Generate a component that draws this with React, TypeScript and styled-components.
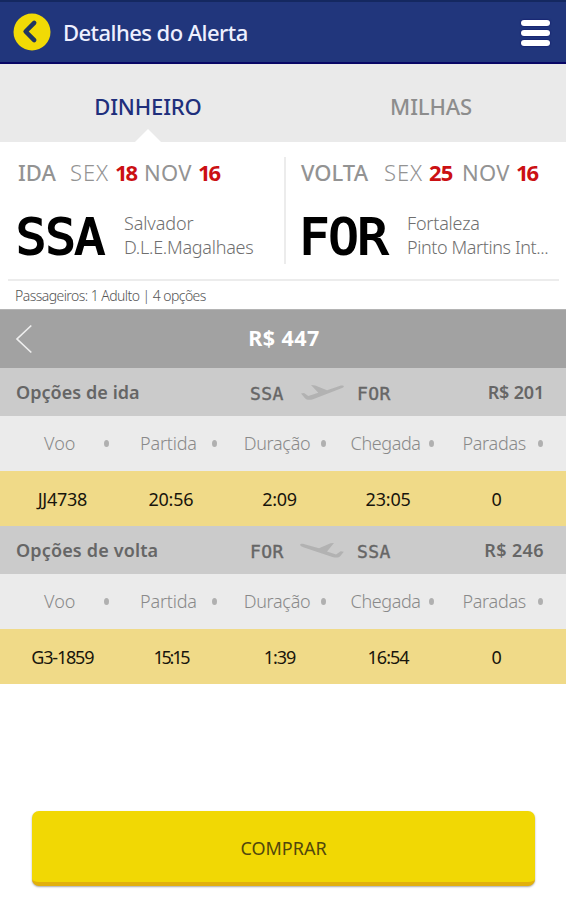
import React from "react";
import styled, { createGlobalStyle } from "styled-components";

const GlobalStyle = createGlobalStyle`
  * { box-sizing: border-box; }
  body { margin: 0; background: #fff; font-family: "Noto Sans", sans-serif; }
  button { font: inherit; border: 0; padding: 0; background: none; }
`;

const Screen = styled.main`
  width: 566px;
  height: 900px;
  display: flex;
  flex-direction: column;
  background: #fff;
  overflow: hidden;
  white-space: nowrap;
`;

const Header = styled.header`
  height: 64px;
  flex: none;
  display: flex;
  align-items: center;
  padding: 0 16px 0 13px;
  background: #21367c;
  border-top: 2px solid #142860;
  border-bottom: 2px solid #080666;
`;

const BackButton = styled.button`
  width: 38px;
  height: 38px;
  svg { display: block; }
`;

const Title = styled.h1`
  flex: 1;
  margin: 0 0 0 12px;
  font-size: 22px;
  line-height: 30px;
  font-weight: 500;
  letter-spacing: -0.55px;
  color: #eef0ff;
`;

const MenuButton = styled.button`
  display: flex;
  flex-direction: column;
  gap: 4px;
  width: 29px;
  margin-top: 1px;
`;

const MenuBar = styled.span`
  height: 6px;
  border-radius: 3px;
  background: #fff;
  box-shadow: 0 0 2px #07075f;
`;

const Tabs = styled.nav`
  height: 78px;
  flex: none;
  display: grid;
  grid-template-columns: 283px 283px;
  padding-left: 6.5px;
  background: #eaeaea;
`;

const Tab = styled.button<{ $active?: boolean }>`
  position: relative;
  padding-bottom: 7px;
  padding-top: 12px;
  line-height: 30px;
  font-size: 22px;
  font-weight: 500;
  letter-spacing: -0.15px;
  color: ${(p) => (p.$active ? "#202f7c" : "#8d8d8d")};
`;

const TabPointer = styled.i`
  position: absolute;
  left: 50%;
  bottom: 0;
  transform: translateX(-50%);
  border: 13px solid transparent;
  border-top: 0;
  border-bottom-color: #fff;
`;

const Trips = styled.section`
  height: 139px;
  flex: none;
  display: grid;
  grid-template-columns: 276px 275px;
  border-bottom: 2px solid #ececec;
  margin: 0 7px 0 8px;
  padding-top: 15px;
`;

const Trip = styled.article<{ $divided?: boolean }>`
  height: 107px;
  padding-left: ${(p) => (p.$divided ? 15 : 10)}px;
  border-left: ${(p) => (p.$divided ? "2px solid #ececec" : "0")};
  min-width: 0;
`;

const DateLine = styled.div`
  display: flex;
  height: 30px;
  line-height: 30px;
  font-size: 22px;
  color: #939393;
`;

const Direction = styled.span<{ $width: number }>`
  width: ${(p) => p.$width}px;
  font-weight: 500;
  letter-spacing: 0;
`;

const Weekday = styled.span`
  width: 45px;
  font-weight: 300;
  letter-spacing: 0.9px;
`;

const Month = styled.span`
  width: 54px;
  letter-spacing: 0.3px;
`;

const DateNumber = styled.span<{ $width?: number; $tight?: boolean }>`
  width: ${(p) => p.$width ?? 24}px;
  font-weight: 700;
  letter-spacing: ${(p) => (p.$tight ? -2.2 : -0.8)}px;
  color: #cb1013;
`;

const AirportLine = styled.div`
  display: flex;
  align-items: center;
  height: 60px;
  margin-top: 18px;
`;

const AirportCode = styled.strong`
  width: 108px;
  margin: 3px 0 0 -2px;
  font: 400 50px/60px "DejaVu Sans Mono", monospace;
  letter-spacing: -0.7px;
  color: #000;
  -webkit-text-stroke: 2px #000;
`;

const AirportName = styled.div`
  font-size: 18px;
  line-height: 24px;
  font-weight: 300;
  color: #6f6f6f;
`;

const Line = styled.div<{ $spacing: number }>`
  letter-spacing: ${(p) => p.$spacing}px;
`;

const Summary = styled.p`
  height: 28px;
  flex: none;
  margin: 0;
  padding-left: 15px;
  font-size: 14px;
  line-height: 29px;
  font-weight: 300;
  letter-spacing: -0.55px;
  color: #555;
`;

const PriceBar = styled.div`
  height: 59px;
  flex: none;
  display: grid;
  grid-template-columns: 36px 1fr 34px;
  align-items: center;
  padding-left: 15px;
  padding-right: 15px;
  background: #a2a2a2;
  border-top: 1px solid #b4b4b4;
  color: #fff;
  text-align: center;
  font-size: 21.5px;
  font-weight: 700;
  letter-spacing: 0.4px;
  svg { display: block; }
`;

const TotalPrice = styled.span`
  padding-bottom: 3px;
`;

const OptionBar = styled.div`
  height: 48px;
  flex: none;
  display: grid;
  grid-template-columns: 234px 50px 57px 1fr;
  align-items: center;
  padding: 0 22px 0 16px;
  background: #cbcbcb;
  color: #666;
  font-size: 18px;
  font-weight: 600;
  svg { display: block; margin-top: 2px; }
`;

const OptionTitle = styled.h2<{ $spacing: number }>`
  margin: 0;
  font-size: 18px;
  line-height: 24px;
  font-weight: 600;
  letter-spacing: ${(p) => p.$spacing}px;
`;

const SmallCode = styled.span`
  margin-top: 3px;
  font: 400 18px/24px "DejaVu Sans Mono", monospace;
  letter-spacing: 0.4px;
  -webkit-text-stroke: 0.4px #666;
`;

const OptionPrice = styled.span<{ $spacing: number }>`
  text-align: right;
  letter-spacing: ${(p) => p.$spacing}px;
`;

const RightSide = styled.div`
  display: flex;
  justify-content: space-between;
  align-items: center;
`;

const Columns = styled.div<{ $kind: "head" | "flight" }>`
  height: 55px;
  flex: none;
  display: grid;
  grid-template-columns: repeat(5, 108.6px);
  align-items: center;
  padding-left: ${(p) => (p.$kind === "head" ? 5.5 : 8)}px;
  padding-bottom: ${(p) => (p.$kind === "head" ? 2 : 0)}px;
  background: ${(p) => (p.$kind === "head" ? "#ebebeb" : "#f0da88")};
  color: ${(p) => (p.$kind === "head" ? "#898989" : "#18150c")};
  font-size: 18px;
  font-weight: ${(p) => (p.$kind === "head" ? 300 : 400)};
  text-align: center;
`;

const Cell = styled.span<{ $spacing?: number }>`
  position: relative;
  line-height: 24px;
  letter-spacing: ${(p) => p.$spacing ?? 0}px;
`;

const SortDot = styled.i`
  position: absolute;
  left: 98px;
  top: 9px;
  width: 5px;
  height: 7px;
  border-radius: 50%;
  background: #b0b0b0;
`;

const Footer = styled.footer`
  margin-top: auto;
  padding: 0 31px 14px 32px;
`;

const BuyButton = styled.button`
  display: block;
  width: 100%;
  height: 75px;
  padding-top: 2px;
  border-radius: 7px;
  border-bottom: 4px solid #e2b00c;
  background: #f1d804;
  box-shadow: 0 1px 2px #aaa;
  font-size: 18px;
  color: #51470c;
`;

const BackIcon = () => (
  <svg width="38" height="38" viewBox="0 0 38 38">
    <circle cx="19" cy="19" r="18.5" fill="#f1da05" />
    <path d="M21.200 9.800 12.600 18.500l8.600 8.700" fill="none" stroke="#203661" strokeWidth="4.500" strokeLinecap="round" strokeLinejoin="round" />
  </svg>
);

const ChevronIcon = () => (
  <svg width="18" height="30" viewBox="0 0 18 30">
    <path d="M16.300 1.500 2 15l14.300 13.500" fill="none" stroke="#eee" strokeWidth="1.700" />
  </svg>
);

const DepartureIcon = () => (
  <svg width="44" height="18" viewBox="0 0 44 18">
    <path d="M1 9.400 4 9l4.300 3 10-3.200L11 1l4.200.4L27 6.300 39.500 2c2-.7 4-.5 4.300.2.2 1-1.200 1.700-3 2.400L13 15.200c-3 1-6.500.8-8-.9Z" fill="#b2b2b2" />
  </svg>
);

const ArrivalIcon = () => (
  <svg width="44" height="18" viewBox="0 0 44 18">
    <path d="M.2 2.800C.3 1.700 2 1.500 4.500 2.200L19 6.300 30.500 1.200 34 1l-7 8.500 9 2.900 4.700-3.200 3.100.5-3.400 4.300c-1.500 1.800-4.800 2-8 1L4 5.500C1.500 4.600.1 3.800.2 2.800Z" fill="#b2b2b2" />
  </svg>
);

const headings = [
  { text: "Voo", spacing: 0 },
  { text: "Partida", spacing: -0.2 },
  { text: "Duração", spacing: -0.3 },
  { text: "Chegada", spacing: -0.4 },
  { text: "Paradas", spacing: -0.3 },
];

interface Value { text: string; spacing?: number }
interface OptionProps {
  title: string;
  titleSpacing: number;
  from: string;
  to: string;
  price: string;
  priceSpacing: number;
  icon: React.ReactNode;
  values: Value[];
}

const FlightOption = (p: OptionProps) => (
  <>
    <OptionBar>
      <OptionTitle $spacing={p.titleSpacing}>{p.title}</OptionTitle>
      <SmallCode>{p.from}</SmallCode>
      {p.icon}
      <RightSide>
        <SmallCode>{p.to}</SmallCode>
        <OptionPrice $spacing={p.priceSpacing}>{p.price}</OptionPrice>
      </RightSide>
    </OptionBar>
    <Columns $kind="head">
      {headings.map((h) => (
        <Cell key={h.text} $spacing={h.spacing}>
          {h.text}
          <SortDot />
        </Cell>
      ))}
    </Columns>
    <Columns $kind="flight">
      {p.values.map((v) => (
        <Cell key={v.text} $spacing={v.spacing}>{v.text}</Cell>
      ))}
    </Columns>
  </>
);

export default function App() {
  return (
    <Screen>
      <GlobalStyle />
      <Header>
        <BackButton aria-label="Voltar"><BackIcon /></BackButton>
        <Title>Detalhes do Alerta</Title>
        <MenuButton aria-label="Menu"><MenuBar /><MenuBar /><MenuBar /></MenuButton>
      </Header>
      <Tabs>
        <Tab $active>DINHEIRO<TabPointer /></Tab>
        <Tab>MILHAS</Tab>
      </Tabs>
      <Trips>
        <Trip>
          <DateLine>
            <Direction $width={52}>IDA</Direction>
            <Weekday>SEX</Weekday>
            <DateNumber $width={29} $tight>18</DateNumber>
            <Month>NOV</Month>
            <DateNumber $tight>16</DateNumber>
          </DateLine>
          <AirportLine>
            <AirportCode>SSA</AirportCode>
            <AirportName>
              <Line $spacing={-0.1}>Salvador</Line>
              <Line $spacing={-0.25}>D.L.E.Magalhaes</Line>
            </AirportName>
          </AirportLine>
        </Trip>
        <Trip $divided>
          <DateLine>
            <Direction $width={83}>VOLTA</Direction>
            <Weekday>SEX</Weekday>
            <DateNumber $width={33}>25</DateNumber>
            <Month>NOV</Month>
            <DateNumber $tight>16</DateNumber>
          </DateLine>
          <AirportLine>
            <AirportCode>FOR</AirportCode>
            <AirportName>
              <Line $spacing={-0.2}>Fortaleza</Line>
              <Line $spacing={-0.4}>Pinto Martins Int...</Line>
            </AirportName>
          </AirportLine>
        </Trip>
      </Trips>
      <Summary>Passageiros: 1 Adulto | 4 opções</Summary>
      <PriceBar><ChevronIcon /><TotalPrice>R$ 447</TotalPrice></PriceBar>
      <FlightOption
        title="Opções de ida"
        titleSpacing={0.05}
        from="SSA"
        to="FOR"
        price="R$ 201"
        priceSpacing={-0.2}
        icon={<DepartureIcon />}
        values={[
          { text: "JJ4738", spacing: -0.3 },
          { text: "20:56", spacing: -0.2 },
          { text: "2:09", spacing: -0.3 },
          { text: "23:05", spacing: -0.2 },
          { text: "0" },
        ]}
      />
      <FlightOption
        title="Opções de volta"
        titleSpacing={0.15}
        from="FOR"
        to="SSA"
        price="R$ 246"
        priceSpacing={0.4}
        icon={<ArrivalIcon />}
        values={[
          { text: "G3-1859", spacing: -1.2 },
          { text: "15:15", spacing: -2.2 },
          { text: "1:39", spacing: -1.1 },
          { text: "16:54", spacing: -1 },
          { text: "0" },
        ]}
      />
      <Footer><BuyButton>COMPRAR</BuyButton></Footer>
    </Screen>
  );
}
